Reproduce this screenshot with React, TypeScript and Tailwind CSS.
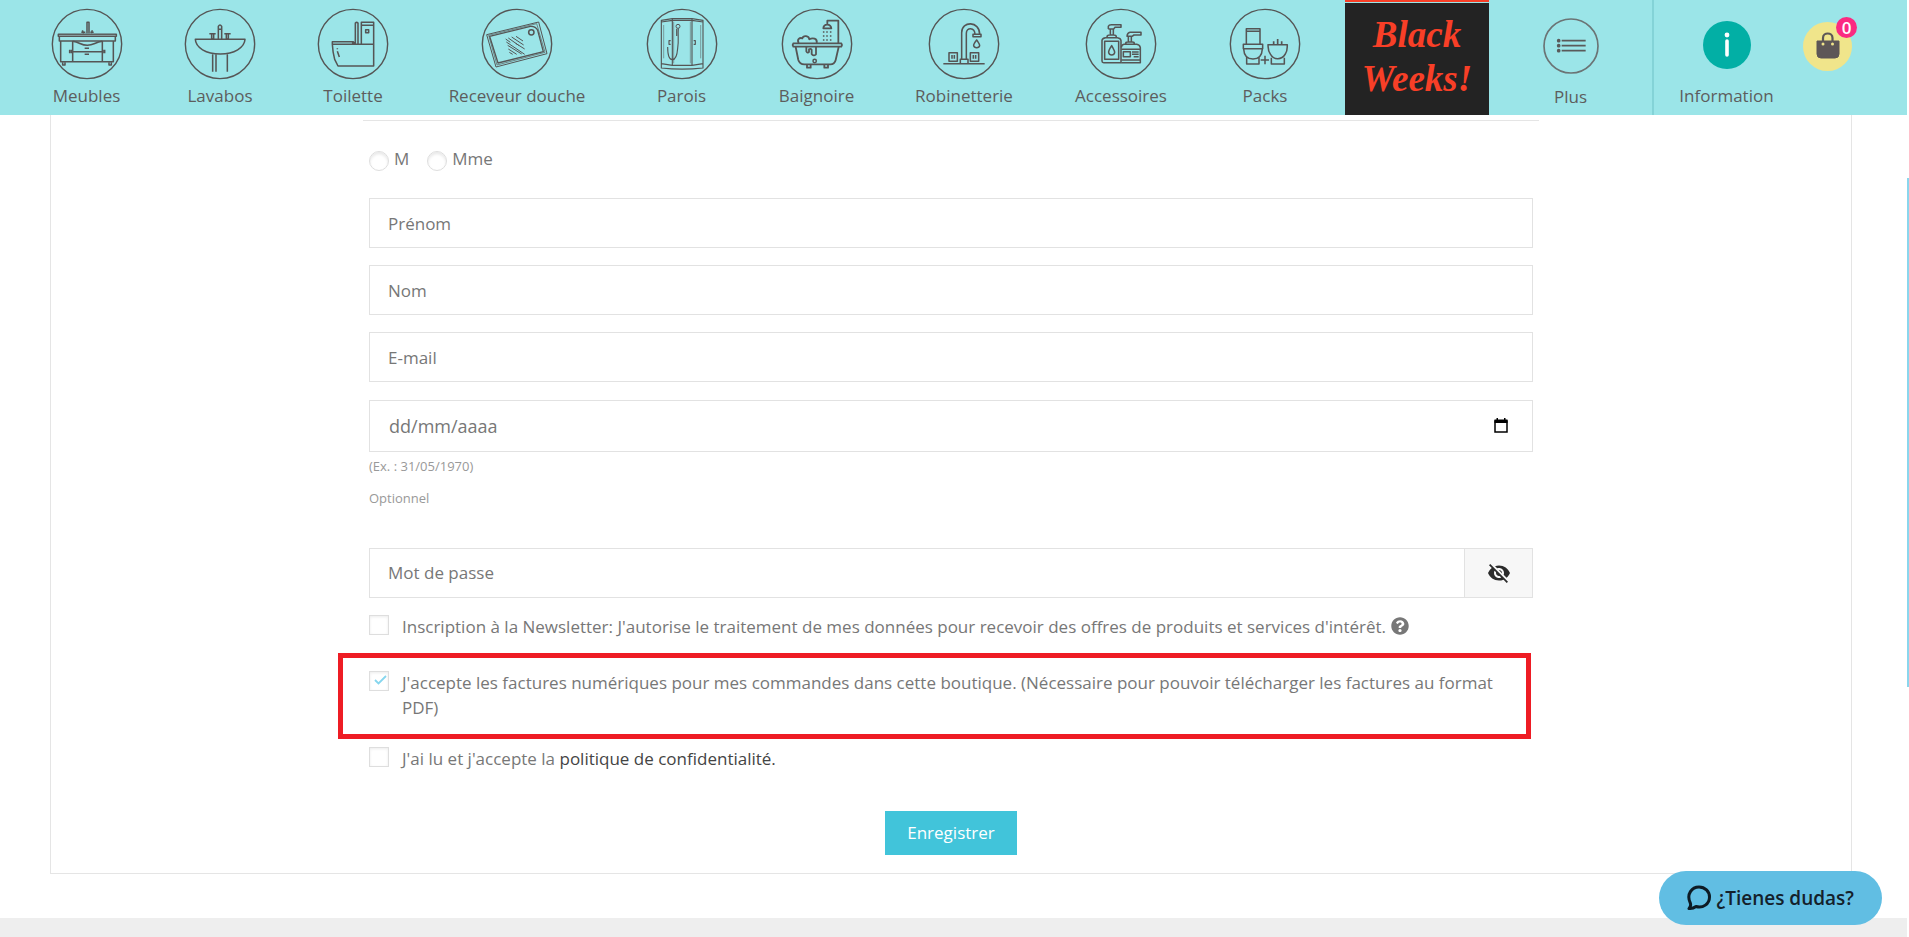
import type { ReactNode } from "react";
import { FaQuestionCircle } from "react-icons/fa";
import { MdVisibilityOff } from "react-icons/md";

function RoundIcon({ cx, children }: { cx: number; children: ReactNode }) {
  return (
    <svg
      viewBox={`${cx - 108} 24 216 216`}
      className="size-[72px]"
      fill="none"
      stroke="#555"
      strokeWidth="4.6"
      strokeLinejoin="round"
      aria-hidden="true"
    >
      <circle cx={cx} cy="132" r="104" strokeWidth="4.2" />
      {children}
    </svg>
  );
}

const furniture = (
  <RoundIcon cx={169}>
    <path d="M83 103H257V109H83ZM86 109V123H254V109M90 124V185H248V124M126 124V185M215 124V185M126 155H215" />
    <path d="M126 124C148 127 150 136 170 136C190 136 192 127 215 124M117 149V160M122 149V160M217 149V160M222 149V160M162 145H175M162 163H175" />
    <path d="M96 187V195H103V187M235 187V195H242V187M169 100V67H175V100M155 91L159 100M185 91L182 100M152 97H164M179 97H189" />
    <path d="M86 106H254" stroke="#8a9a9b" strokeWidth="3" />
  </RoundIcon>
);

const basin = (
  <RoundIcon cx={570}>
    <path d="M496 118H645C644 143 612 162 571 162C528 162 497 143 496 118Z" />
    <path d="M548 163V215M558 163V215M592 163V215M565 117V79Q570 71 575 79V117M565 88H575M538 101H557M583 101H602M545 103V117H551V103M589 103V117H595V103" />
  </RoundIcon>
);

const toilet = (
  <RoundIcon cx={969}>
    <path d="M907 133H1031V198H924L914 178Q908 155 907 133ZM907 133V125H969L977 132M968 132V126M976 132V69Q980 65 984 69V132M994 132V67H1031V133M994 76H1031M1007 89H1016V98H1007ZM922 145V148M922 154L928 171" />
  </RoundIcon>
);

const tray = (
  <RoundIcon cx={263}>
    <path d="M172 104L328 66L353 161L200 201Z" strokeWidth="3" />
    <path d="M181 109L303 79Q319 78 325 91L342 155L206 189Z" strokeWidth="4" />
    <path d="M178 106L322 71L347 157L203 195Z" strokeWidth="2" />
    <circle cx="306" cy="97" r="8" />
    <path
      d="M229 117L243 127M237 114L268 136M247 111L283 135M260 109L281 123M231 126L286 163M235 136L277 162M237 147L262 163M240 157L250 163M259 130L286 147"
      strokeWidth="3"
    />
  </RoundIcon>
);

const shower = (
  <RoundIcon cx={757}>
    <path d="M695 61L728 56H787L820 61V204Q757 211 695 204ZM695 66L728 61H787L820 66M728 56V195M787 56V195M695 191L728 196H787L820 191" strokeWidth="3.4" />
    <path d="M702 75V175M813 75V175M732 65V190M782 65V190" strokeWidth="1.5" />
    <circle cx="745" cy="79" r="6" strokeWidth="3" />
    <path d="M741 86V108M746 85C744 105 748 120 744 145C742 170 737 179 728 179C716 179 714 163 714 141M723 122H718V133H723M792 122H797V133H792" strokeWidth="3.4" />
  </RoundIcon>
);

const bath = (
  <RoundIcon cx={1162}>
    <path
      d="M1091 130H1235Q1239 135 1235 140H1091Q1087 135 1091 130ZM1098 141L1106 180Q1110 193 1124 193H1202Q1215 193 1218 180L1227 141M1132 194V203H1143V194M1184 194V203H1195V194"
      strokeWidth="5.4"
    />
    <path
      d="M1107 129C1101 118 1110 112 1118 115C1121 105 1138 107 1139 118C1149 112 1164 115 1161 129M1130 141V154Q1134 161 1138 156V148Q1143 145 1146 149V162Q1151 170 1159 163V141M1226 129V62H1193V74M1181 85C1182 70 1203 70 1205 85Z"
      strokeWidth="5.4"
    />
    <circle cx="1155" cy="183" r="5" />
    <path d="M1182 94V125M1192 94V125M1203 94V125" strokeDasharray="4 8" />
  </RoundIcon>
);

const tap = (
  <RoundIcon cx={226}>
    <path d="M164 191H288M215 190V178H238V190M219 178V98C219 62 273 62 273 103M233 178V100C233 81 258 81 259 103M253 103H277V110H253ZM181 158H206V184H181ZM245 158H270V184H245ZM190 165V176M197 165V176M254 165V176M261 165V176" />
    <path d="M264 120C257 129 254 133 255 137C257 145 271 145 273 137C274 133 270 129 264 120Z" />
  </RoundIcon>
);

const dispenser = (
  <RoundIcon cx={697}>
    <path d="M640 183V121Q641 114 651 113H686Q696 114 697 122V188H645Q640 188 640 183ZM648 124H690V178H648ZM655 111Q655 105 663 105H675Q683 105 683 111M665 104V87H674V104M659 87V79Q661 74 668 74H697V82H679L675 87H659" />
    <path d="M698 188H755V143Q753 134 744 133H706Q699 134 698 142M698 148H755M698 180H755M711 131Q711 126 717 126H731Q737 126 737 131M719 125V109H728V125M715 109Q716 98 724 97H757V105H736L730 109ZM704 155H725V170H704ZM730 156H750M730 163H750M735 170H750" />
    <path d="M669 137C661 149 659 153 660 158C662 167 676 167 678 158C679 153 675 148 669 137Z" />
  </RoundIcon>
);

const packs = (
  <RoundIcon cx={1129}>
    <path d="M1073 131V86H1114V131M1073 94H1114M1064 133H1122V146H1064ZM1065 147C1066 167 1077 177 1093 177C1109 177 1120 167 1121 147M1074 172V192H1111V172M1138 134H1196C1195 146 1197 153 1190 162C1178 182 1155 180 1145 162C1137 152 1139 144 1138 134ZM1148 173V192H1187V173M1129 167V193M1116 180H1141" />
    <path d="M1155 133V124M1167 133V117M1179 133V124" strokeWidth="5" />
  </RoundIcon>
);

const categories = [
  { label: "Meubles", icon: furniture, width: "w-[133px]" },
  { label: "Lavabos", icon: basin, width: "w-[134px]" },
  { label: "Toilette", icon: toilet, width: "w-[132px]" },
  { label: "Receveur douche", icon: tray, width: "w-[196px]" },
  { label: "Parois", icon: shower, width: "w-[133px]" },
  { label: "Baignoire", icon: bath, width: "w-[137px]" },
  { label: "Robinetterie", icon: tap, width: "w-[158px]" },
  { label: "Accessoires", icon: dispenser, width: "w-[156px]" },
  { label: "Packs", icon: packs, width: "w-[132px]" },
];

function TextField({ id, label, type = "text" }: { id: string; label: string; type?: string }) {
  return (
    <input
      id={id}
      type={type}
      aria-label={label}
      placeholder={label}
      className="block h-[50px] w-full border border-[#e2e2e2] bg-white px-[18px] outline-none placeholder:text-[#777]"
    />
  );
}

function Check({ id, checked, children }: { id: string; checked?: boolean; children: ReactNode }) {
  return (
    <div className="flex items-start gap-[13px]">
      <span className="mt-px grid size-5 shrink-0">
        <input
          id={id}
          type="checkbox"
          defaultChecked={checked}
          className="peer col-start-1 row-start-1 size-5 appearance-none border border-[#dedede] bg-white shadow-[inset_0_1px_3px_#ececec]"
        />
        <svg
          viewBox="0 0 20 20"
          className="pointer-events-none invisible col-start-1 row-start-1 size-5 peer-checked:visible"
          fill="none"
          stroke="#86d6ee"
          strokeWidth="1.8"
          aria-hidden="true"
        >
          <path d="M6 9L9.5 12.5L17 5" />
        </svg>
      </span>
      <label htmlFor={id} className="leading-[25px]">
        {children}
      </label>
    </div>
  );
}

function Radio({ id, label }: { id: string; label: string }) {
  return (
    <div className="flex items-center gap-[5px]">
      <input
        id={id}
        name="title"
        type="radio"
        className="mt-[5px] size-5 appearance-none rounded-full border border-[#dedede] bg-white shadow-[inset_0_2px_3px_#e8e8e8]"
      />
      <label htmlFor={id} className="leading-[25px]">
        {label}
      </label>
    </div>
  );
}

export default function App() {
  return (
    <div className="flex min-h-screen bg-white font-['Open_Sans',sans-serif] text-[17px] text-[#777]">
      <div className="flex min-w-0 flex-1 flex-col">
        <header className="flex h-[115px] bg-[#9be5e8] pl-5 leading-6 text-[#5d5d5d]">
          <nav className="flex" aria-label="Catégories">
            {categories.map((c) => (
              <a key={c.label} href="#" className={`flex shrink-0 flex-col items-center pt-2 ${c.width}`}>
                {c.icon}
                <span className="mt-1 whitespace-nowrap">{c.label}</span>
              </a>
            ))}
            <a
              href="#"
              className="ml-[14px] flex w-36 shrink-0 flex-col border-t-2 border-[#f83f27] pt-px text-center font-['Liberation_Serif',serif] text-[37px] leading-[44px] font-bold text-[#f83f27] italic"
            >
              <span className="flex-1 bg-[#232323] pt-[10px]">
                Black
                <br />
                Weeks!
              </span>
            </a>
            <a href="#" className="flex w-[163px] shrink-0 flex-col items-center pt-[18px]">
              <svg viewBox="607 55 168 168" className="size-14" fill="none" stroke="#6b7475" strokeWidth="5" aria-hidden="true">
                <circle cx="691" cy="139" r="81" />
                <path d="M663 123H735M663 138H735M663 153H735" stroke="#5a5a5a" />
                <path d="M654 123h.1M654 138h.1M654 153h.1" stroke="#5a5a5a" strokeWidth="11" strokeLinecap="round" />
              </svg>
              <span className="mt-[11px]">Plus</span>
            </a>
          </nav>
          <div className="flex border-l-2 border-[#84d3d7]">
            <a href="#" className="flex w-[145px] shrink-0 flex-col items-center pt-[21px]">
              <svg viewBox="0 0 48 48" className="size-12" aria-hidden="true">
                <circle cx="24" cy="24" r="24" fill="#02afa5" />
                <circle cx="24" cy="14" r="2.4" fill="#fff" />
                <path d="M24 20V34" stroke="#fff" strokeWidth="3.6" strokeLinecap="round" />
              </svg>
              <span className="mt-[15px]">Information</span>
            </a>
            <a href="#" aria-label="Panier" className="relative ml-1 mt-[22px] block size-[49px] shrink-0 rounded-full bg-[#f0e58b]">
              <svg viewBox="0 0 49 49" className="size-full" aria-hidden="true">
                <path d="M14 19H36V32Q36 36 32 36H18Q14 36 14 32Z" fill="#5d5757" stroke="#5d5757" strokeLinejoin="round" />
                <path d="M20 20V16C20 10 29.500 10 29.500 16V20" fill="none" stroke="#5d5757" strokeWidth="2.200" />
                <circle cx="20" cy="22" r="1.500" fill="#f0e58b" />
                <circle cx="29.500" cy="22" r="1.500" fill="#f0e58b" />
              </svg>
              <span className="absolute -top-[5px] -right-[5px] flex size-[21px] items-center justify-center rounded-full bg-[#fb2a81] font-semibold text-white">
                0
              </span>
            </a>
          </div>
        </header>

        <main className="mr-[55px] ml-[50px] border-x border-b border-[#e5e5e5] px-[312px] pt-[5px] pb-[18px]">
          <hr className="border-[#e5e5e5]" />
          <form className="px-[6px]" onSubmit={(e) => e.preventDefault()}>
            <div className="mt-[25px] flex gap-[18px]">
              <Radio id="m" label="M" />
              <Radio id="mme" label="Mme" />
            </div>
            <div className="mt-[27px] flex flex-col gap-[17px]">
              <TextField id="firstname" label="Prénom" />
              <TextField id="lastname" label="Nom" />
              <TextField id="email" label="E-mail" type="email" />
            </div>
            <div className="mt-[18px] flex h-[52px] items-center border border-[#e2e2e2] pr-6 pl-[19px]">
              <input
                id="birthday"
                type="text"
                aria-label="Date de naissance"
                placeholder="dd/mm/aaaa"
                className="min-w-0 flex-1 bg-transparent text-[18px] outline-none placeholder:text-[#777]"
              />
              <button type="button" aria-label="Ouvrir le calendrier">
                <svg viewBox="0 0 14 16" className="block h-4 w-3.5" aria-hidden="true">
                  <path d="M1 3H13V14H1Z" fill="none" stroke="#000" strokeWidth="1.500" />
                  <path d="M0.500 1.500H13.500V5H0.500ZM2.500 0H4V2H2.500ZM10 0H11.500V2H10Z" fill="#000" />
                </svg>
              </button>
            </div>
            <p className="mt-1 text-[13px] leading-5 text-[#999]">(Ex. : 31/05/1970)</p>
            <p className="mt-3 text-[13px] leading-5 text-[#999]">Optionnel</p>
            <div className="mt-10 flex h-[50px] border border-[#e2e2e2]">
              <input
                id="password"
                type="password"
                aria-label="Mot de passe"
                placeholder="Mot de passe"
                className="min-w-0 flex-1 px-[18px] outline-none placeholder:text-[#777]"
              />
              <button
                type="button"
                aria-label="Afficher le mot de passe"
                className="flex w-[68px] items-center justify-center border-l border-[#e2e2e2] bg-[#f7f7f7] text-[#2b2b2b]"
              >
                <MdVisibilityOff className="size-6" />
              </button>
            </div>
            <div className="mt-4">
              <Check id="newsletter">
                Inscription à la Newsletter: J'autorise le traitement de mes données pour recevoir des offres de
                produits et services d'intérêt.
                <FaQuestionCircle className="ml-[5px] inline size-[18px] align-[-2px]" />
              </Check>
            </div>
            <div className="mt-[14px] mr-[2px] -ml-[31px] border-5 border-[#ee1c24] pt-3 pb-[14px] pl-[26px]">
              <Check id="invoices" checked>
                J'accepte les factures numériques pour mes commandes dans cette boutique. (Nécessaire pour pouvoir
                télécharger les factures au format PDF)
              </Check>
            </div>
            <div className="mt-[7px]">
              <Check id="privacy">
                J'ai lu et j'accepte la{" "}
                <a href="#" className="text-[#444]">
                  politique de confidentialité.
                </a>
              </Check>
            </div>
            <div className="mt-10 flex justify-center">
              <button type="submit" className="h-11 bg-[#41c4da] px-[22px] text-white">
                Enregistrer
              </button>
            </div>
          </form>
        </main>
        <footer className="mt-11 min-h-5 flex-1 bg-[#eee]" />
      </div>

      <div className="w-[2px] bg-white pt-[178px]">
        <div className="h-[509px] bg-[#8ad6ed]" />
      </div>

      <button
        type="button"
        className="fixed right-[27px] bottom-3 flex h-[54px] items-center gap-[6px] rounded-full bg-[#61bee3] px-7 text-[19px] font-semibold text-[#14212b]"
      >
        <svg viewBox="0 0 24 26" className="h-[26px] w-6" fill="none" stroke="#0d1b24" strokeWidth="3" strokeLinejoin="round" aria-hidden="true">
          <path d="M2 23.500C4 21.500 4 20 3.300 18C-1 9 5 2 12 2C18 2 22.500 6.500 22.500 12C22.500 19 16 23.500 9 21.500C7 23 4.500 23.800 2 23.500Z" />
        </svg>
        ¿Tienes dudas?
      </button>
    </div>
  );
}
